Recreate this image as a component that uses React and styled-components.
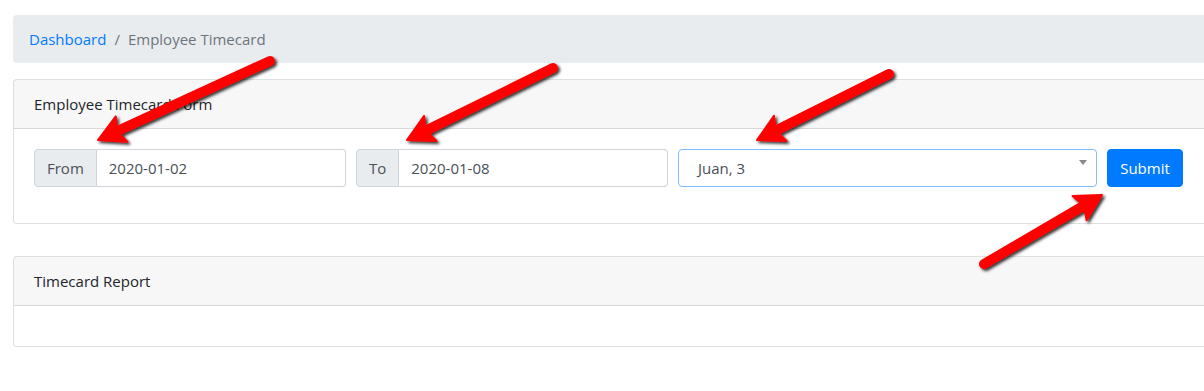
import React from "react";
import styled, { createGlobalStyle } from "styled-components";

const Global = createGlobalStyle`
  html, body { margin: 0; padding: 0; background: #fff; overflow: hidden; }
  body { font-family: "Open Sans", "Noto Sans", sans-serif; font-size: 15px; color: #212529; }
  * { box-sizing: border-box; }
`;

const Page = styled.div`
  position: relative;
  width: 1230px;
  padding: 15px 0 0 13px;
`;

const Content = styled.div`
  width: 1217px;
  display: flex;
  flex-direction: column;
`;

const Breadcrumb = styled.nav`
  display: flex;
  align-items: center;
  background: #e9ecef;
  border-radius: 4px;
  padding: 12px 16px;
  line-height: 24px;
  margin-bottom: 16px;
`;

const Crumb = styled.span`
  color: ${(p) => (p.$link ? "#007bff" : "#6c757d")};
`;

const Sep = styled.span`
  color: #6c757d;
  padding: 0 8px;
`;

const Card = styled.section`
  border: 1px solid rgba(0, 0, 0, 0.125);
  border-radius: 4px;
  margin-bottom: 32px;
  background: #fff;
`;

const CardHeader = styled.header`
  padding: 12px 20px;
  line-height: 24px;
  background: rgba(0, 0, 0, 0.03);
  border-bottom: 1px solid rgba(0, 0, 0, 0.125);
`;

const CardBody = styled.div`
  padding: 20px;
  min-height: 40px;
`;

const FormRow = styled.form`
  display: flex;
  gap: 10px;
  margin-bottom: 16px;
`;

const InputGroup = styled.div`
  display: flex;
  width: ${(p) => p.$w}px;
  height: 38px;
`;

const Addon = styled.span`
  display: flex;
  align-items: center;
  padding: 0 12px;
  background: #e9ecef;
  border: 1px solid #ced4da;
  border-radius: 4px 0 0 4px;
  color: #495057;
  line-height: 24px;
`;

const Field = styled.div`
  flex: 1;
  display: flex;
  align-items: center;
  padding: 0 12px;
  border: 1px solid #ced4da;
  border-left: none;
  border-radius: 0 4px 4px 0;
  color: #495057;
`;

const Select = styled.div`
  position: relative;
  width: 419px;
  height: 38px;
  display: flex;
  align-items: center;
  padding: 0 19px;
  border: 1px solid #80bdff;
  border-radius: 4px;
  color: #495057;
`;

const Caret = styled.span`
  position: absolute;
  right: 9px;
  top: 10px;
  width: 0;
  height: 0;
  border-left: 4px solid transparent;
  border-right: 4px solid transparent;
  border-top: 5px solid #888;
`;

const Button = styled.button`
  width: 76px;
  height: 38px;
  border: 1px solid #007bff;
  background: #007bff;
  color: #fff;
  border-radius: 4px;
  font: inherit;
  line-height: 24px;
  padding: 0;
`;

const Overlay = styled.svg`
  position: absolute;
  left: 0;
  top: 0;
  pointer-events: none;
  overflow: visible;
`;

function Arrow({ tail, tip }) {
  const dx = tip[0] - tail[0];
  const dy = tip[1] - tail[1];
  const len = Math.hypot(dx, dy);
  const ux = dx / len;
  const uy = dy / len;
  const nx = -uy;
  const ny = ux;
  const L = 26;
  const W = 14;
  const bx = tip[0] - ux * L;
  const by = tip[1] - uy * L;
  const nxb = tip[0] - ux * (L - 5);
  const nyb = tip[1] - uy * (L - 5);
  const pts = [
    [tip[0], tip[1]],
    [bx + nx * W, by + ny * W],
    [nxb, nyb],
    [bx - nx * W, by - ny * W],
  ]
    .map((p) => p.join(","))
    .join(" ");
  return (
    <g filter="url(#shadow)">
      <line
        x1={tail[0]}
        y1={tail[1]}
        x2={nxb + ux * 2}
        y2={nyb + uy * 2}
        stroke="#ff0000"
        strokeWidth="10"
        strokeLinecap="round"
      />
      <polygon points={pts} fill="#ff0000" strokeLinejoin="round" stroke="#ff0000" strokeWidth="2" />
    </g>
  );
}

export default function App() {
  return (
    <>
      <Global />
      <Page>
        <Content>
          <Breadcrumb>
            <Crumb $link>Dashboard</Crumb>
            <Sep>/</Sep>
            <Crumb>Employee Timecard</Crumb>
          </Breadcrumb>
          <Card>
            <CardHeader>Employee Timecard Form</CardHeader>
            <CardBody>
              <FormRow>
                <InputGroup $w={312}>
                  <Addon>From</Addon>
                  <Field>2020-01-02</Field>
                </InputGroup>
                <InputGroup $w={312}>
                  <Addon>To</Addon>
                  <Field>2020-01-08</Field>
                </InputGroup>
                <Select>
                  Juan, 3
                  <Caret />
                </Select>
                <Button type="button">Submit</Button>
              </FormRow>
            </CardBody>
          </Card>
          <Card>
            <CardHeader>Timecard Report</CardHeader>
            <CardBody />
          </Card>
        </Content>
        <Overlay width="1204" height="391">
          <defs>
            <filter id="shadow" x="-20%" y="-20%" width="140%" height="140%">
              <feDropShadow dx="2" dy="2" stdDeviation="1.5" floodColor="#000" floodOpacity="0.8" />
            </filter>
          </defs>
          <Arrow tail={[270, 61]} tip={[98, 140]} />
          <Arrow tail={[553, 68]} tip={[407, 140]} />
          <Arrow tail={[889, 74]} tip={[757, 140]} />
          <Arrow tail={[984, 264]} tip={[1102, 195]} />
        </Overlay>
      </Page>
    </>
  );
}
